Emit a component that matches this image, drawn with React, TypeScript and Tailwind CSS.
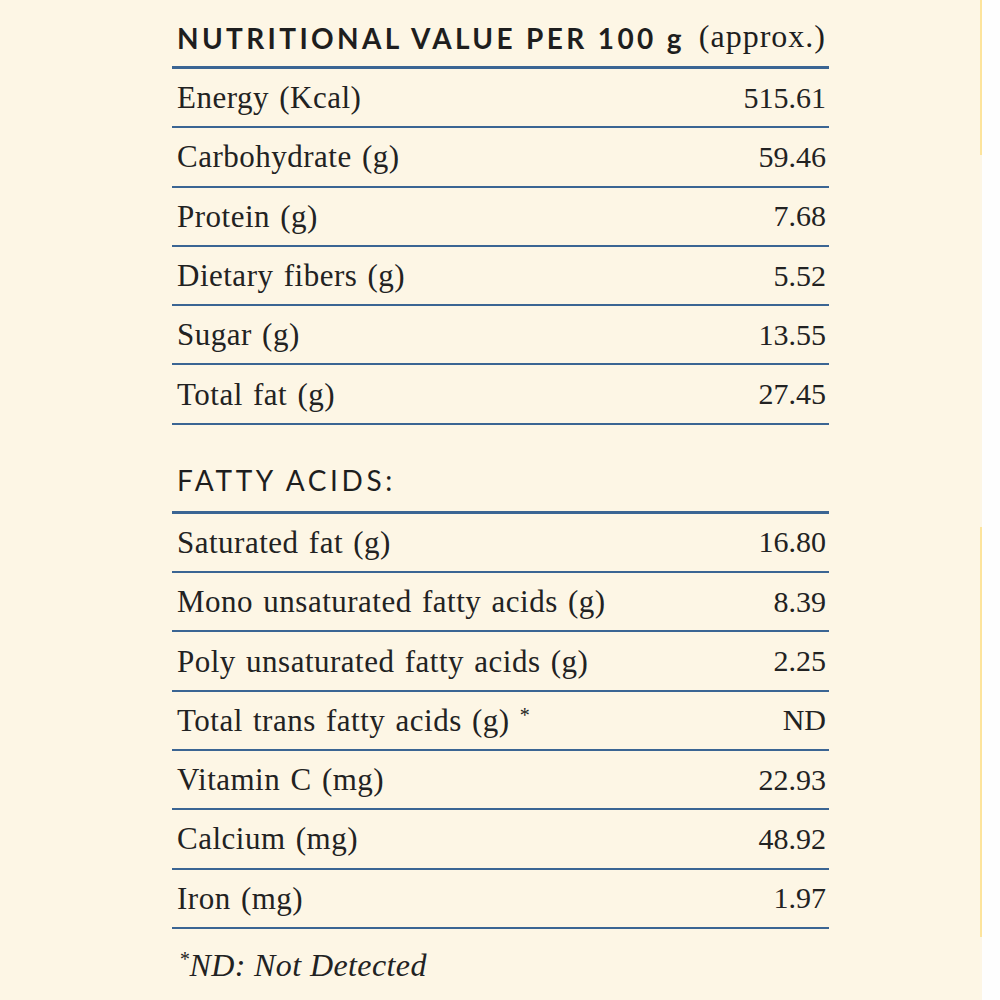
import React from "react";

const serif = { fontFamily: '"Liberation Serif", "Times New Roman", serif' };
const sans = { fontFamily: 'Lato, "Open Sans", sans-serif' };

const main: [string, string][] = [
  ["Energy (Kcal)", "515.61"],
  ["Carbohydrate (g)", "59.46"],
  ["Protein (g)", "7.68"],
  ["Dietary fibers (g)", "5.52"],
  ["Sugar (g)", "13.55"],
  ["Total fat (g)", "27.45"],
];

const fatty: [string, string, boolean?][] = [
  ["Saturated fat (g)", "16.80"],
  ["Mono unsaturated fatty acids (g)", "8.39"],
  ["Poly unsaturated fatty acids (g)", "2.25"],
  ["Total trans fatty acids (g)", "ND", true],
  ["Vitamin C (mg)", "22.93"],
  ["Calcium (mg)", "48.92"],
  ["Iron (mg)", "1.97"],
];

function Row({ label, value, star }: { label: string; value: string; star?: boolean }) {
  return (
    <div
      className="h-[59.3px] border-b-2 border-[#3b6593] flex items-center justify-between pl-[5px] pr-[3px] text-[#222222] leading-none"
      style={serif}
    >
      <span className="text-[31px] tracking-[0.5px] [word-spacing:2px]">
        {label}
        {star && <span className="text-[20px] align-top ml-[10px]">*</span>}
      </span>
      <span className="text-[30px]">{value}</span>
    </div>
  );
}

export default function App() {
  return (
    <div className="w-[1000px] h-[1000px] flex bg-white overflow-hidden">
      <div className="w-[980px] h-full bg-[#fdf6e5] pl-[172px]">
        <div className="w-[657px]">
          <div className="h-[66px] flex items-end pb-[14px] pl-[5px] pr-[3px] justify-between text-[#1e1e1e]">
            <span
              className="text-[28px] font-bold tracking-[0.12em] leading-none"
              style={sans}
            >
              NUTRITIONAL VALUE PER 100 g
            </span>
            <span className="text-[32px] tracking-[1px] leading-none" style={serif}>
              (approx.)
            </span>
          </div>
          <div className="h-[3px] bg-[#3b6593]" />
          {main.map(([l, v]) => (
            <Row key={l} label={l} value={v} />
          ))}
          <div className="h-[86px] flex items-end pb-[17px] pl-[5px]">
            <span
              className="text-[28px] tracking-[0.13em] leading-none text-[#1e1e1e]"
              style={sans}
            >
              FATTY ACIDS:
            </span>
          </div>
          <div className="h-[3px] bg-[#3b6593]" />
          {fatty.map(([l, v, s]) => (
            <Row key={l} label={l} value={v} star={s} />
          ))}
          <div className="pt-[20px] pl-[7px]">
            <span
              className="text-[32px] italic tracking-[0.4px] leading-none text-[#222222]"
              style={serif}
            >
              <span className="text-[20px] align-top">*</span>ND: Not Detected
            </span>
          </div>
        </div>
      </div>
      <div className="w-[2px] h-full bg-[#fdf6e5] flex flex-col">
        <div className="h-[155px] bg-[#fde49c]" />
        <div className="h-[372px]" />
        <div className="h-[410px] bg-[#fde49c]" />
      </div>
      <div className="flex-1 h-full bg-[#fefefe]" />
    </div>
  );
}
